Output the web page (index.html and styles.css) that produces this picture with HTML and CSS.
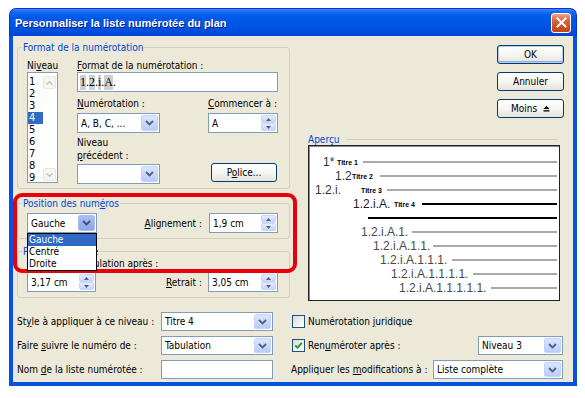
FILE: index.html
```html
<!DOCTYPE html>
<html lang="fr">
<head>
    <meta charset="UTF-8">
    <meta name="viewport" content="width=device-width, initial-scale=1.0">
    <title>Personnaliser la liste numérotée du plan</title>
    <link rel="stylesheet" href="styles.css">
</head>
<body>
    <div class="window">
        <div class="titlebar">
            <span class="title">Personnaliser la liste numérotée du plan</span>
            <span class="close">
                <svg width="11" height="11" viewBox="0 0 11 11"><path d="M1.5 1.5L9.5 9.5M9.5 1.5L1.5 9.5" stroke="#fff" stroke-width="2" stroke-linecap="square"/></svg>
            </span>
        </div>

        <div class="client">
            <div class="top">
                <div class="left-col">
                    <!-- Format de la numérotation -->
                    <fieldset class="group">
                        <legend>Format de la numérotation</legend>
                        <div class="gbody format-body">
                            <div class="niveau-col">
                                <div class="lbl">Ni<u>v</u>eau</div>
                                <div class="listbox">
                                    <div class="items">
                                        <div class="item">1</div>
                                        <div class="item">2</div>
                                        <div class="item">3</div>
                                        <div class="item selected">4</div>
                                        <div class="item">5</div>
                                        <div class="item">6</div>
                                        <div class="item">7</div>
                                        <div class="item">8</div>
                                        <div class="item">9</div>
                                    </div>
                                    <div class="vscroll">
                                        <span class="sbtn"><svg width="7" height="4" viewBox="0 0 7 4"><path d="M0.5 3.5L3.5 0.8L6.5 3.5" fill="none" stroke="#C4C2B5" stroke-width="1.4"/></svg></span>
                                        <span class="sbtn"><svg width="7" height="4" viewBox="0 0 7 4"><path d="M0.5 0.5L3.5 3.2L6.5 0.5" fill="none" stroke="#C4C2B5" stroke-width="1.4"/></svg></span>
                                    </div>
                                </div>
                            </div>

                            <div class="format-col">
                                <div class="lbl"><u>F</u>ormat de la numérotation :</div>
                                <div class="field fmt-field"><span class="fld">1</span>.<span class="fld">2</span>.<span class="fld">i</span>.<span class="fld">A</span>.</div>

                                <div class="frow mt5">
                                    <div class="lbl w131"><u>N</u>umérotation :</div>
                                    <div class="lbl"><u>C</u>ommencer à :</div>
                                </div>
                                <div class="frow mt3">
                                    <div class="combo w83">
                                        <span class="val">A, B, C, ...</span>
                                        <span class="drop"><svg width="9" height="6" viewBox="0 0 9 6"><path d="M1 1l3.5 3.5L8 1" fill="none" stroke="#4D6185" stroke-width="1.8"/></svg></span>
                                    </div>
                                    <div class="spin w70 ml48">
                                        <span class="val">A</span>
                                        <span class="arrows">
                                            <span class="arr"><svg width="5" height="3" viewBox="0 0 5 3"><path d="M0 3h5L2.5 0z" fill="#4D6185"/></svg></span>
                                            <span class="arr"><svg width="5" height="3" viewBox="0 0 5 3"><path d="M0 0h5L2.5 3z" fill="#4D6185"/></svg></span>
                                        </span>
                                    </div>
                                </div>
                                <div class="lbl mt3">Niveau<br><u>p</u>récédent :</div>
                                <div class="frow mt1">
                                    <div class="combo w83 mt1">
                                        <span class="val"></span>
                                        <span class="drop"><svg width="9" height="6" viewBox="0 0 9 6"><path d="M1 1l3.5 3.5L8 1" fill="none" stroke="#4D6185" stroke-width="1.8"/></svg></span>
                                    </div>
                                    <div class="btn police"><span>P<u>o</u>lice...</span></div>
                                </div>
                            </div>
                        </div>
                    </fieldset>

                    <!-- Position des numéros -->
                    <fieldset class="group g-pos">
                        <legend>Position des num<u>é</u>ros</legend>
                        <div class="gbody pos-body">
                            <div class="combo w70 hot">
                                <span class="val">Gauche</span>
                                <span class="drop"><svg width="9" height="6" viewBox="0 0 9 6"><path d="M1 1l3.5 3.5L8 1" fill="none" stroke="#3D4F78" stroke-width="1.8"/></svg></span>
                            </div>
                            <div class="lbl push"><u>A</u>lignement :</div>
                            <div class="spin w69 ml7">
                                <span class="val">1,9 cm</span>
                                <span class="arrows">
                                    <span class="arr"><svg width="5" height="3" viewBox="0 0 5 3"><path d="M0 3h5L2.5 0z" fill="#4D6185"/></svg></span>
                                    <span class="arr"><svg width="5" height="3" viewBox="0 0 5 3"><path d="M0 0h5L2.5 3z" fill="#4D6185"/></svg></span>
                                </span>
                            </div>
                        </div>
                    </fieldset>

                    <!-- Position du texte -->
                    <fieldset class="group g-text">
                        <legend>Position du texte</legend>
                        <div class="gbody text-body">
                            <div class="lbl up1">Position de tabulation après :</div>
                            <div class="frow mt2 center">
                                <div class="spin w69">
                                    <span class="val">3,17 cm</span>
                                    <span class="arrows">
                                        <span class="arr"><svg width="5" height="3" viewBox="0 0 5 3"><path d="M0 3h5L2.5 0z" fill="#4D6185"/></svg></span>
                                        <span class="arr"><svg width="5" height="3" viewBox="0 0 5 3"><path d="M0 0h5L2.5 3z" fill="#4D6185"/></svg></span>
                                    </span>
                                </div>
                                <div class="lbl push"><u>R</u>etrait :</div>
                                <div class="spin w70 ml6">
                                    <span class="val">3,05 cm</span>
                                    <span class="arrows">
                                        <span class="arr"><svg width="5" height="3" viewBox="0 0 5 3"><path d="M0 3h5L2.5 0z" fill="#4D6185"/></svg></span>
                                        <span class="arr"><svg width="5" height="3" viewBox="0 0 5 3"><path d="M0 0h5L2.5 3z" fill="#4D6185"/></svg></span>
                                    </span>
                                </div>
                            </div>
                        </div>
                    </fieldset>
                </div>

                <div class="right-col">
                    <div class="buttons">
                        <div class="btn default"><span>OK</span></div>
                        <div class="btn"><span>Annuler</span></div>
                        <div class="btn"><span>Moins</span><svg class="less" width="7" height="7" viewBox="0 0 7 7"><path d="M0.5 4L3.5 0.8L6.5 4z" fill="#000"/><rect x="0.5" y="5.2" width="6" height="1.3" fill="#000"/></svg></div>
                    </div>

                    <div class="apercu-head">
                        <span class="legend-text">Aperçu</span>
                        <span class="apercu-line"></span>
                    </div>
                    <div class="preview">
                        <div class="pv r1"><span class="num">1*</span><span class="ttl">Titre 1</span><span class="bar"></span></div>
                        <div class="pv r2"><span class="num">1.2</span><span class="ttl">Titre 2</span><span class="bar"></span></div>
                        <div class="pv r3"><span class="num">1.2.i.</span><span class="ttl">Titre 3</span><span class="bar"></span></div>
                        <div class="pv r4"><span class="num">1.2.i.A.</span><span class="ttl">Titre 4</span><span class="bar dark"></span></div>
                        <div class="pv r5"><span class="bar dark"></span></div>
                        <div class="pv r6"><span class="num">1.2.i.A.1.</span><span class="bar"></span></div>
                        <div class="pv r7"><span class="num">1.2.i.A.1.1.</span><span class="bar"></span></div>
                        <div class="pv r8"><span class="num">1.2.i.A.1.1.1.</span><span class="bar"></span></div>
                        <div class="pv r9"><span class="num">1.2.i.A.1.1.1.1.</span><span class="bar"></span></div>
                        <div class="pv r10"><span class="num">1.2.i.A.1.1.1.1.1.</span><span class="bar"></span></div>
                    </div>
                </div>
            </div>

            <div class="bottom">
                <div class="bl">
                    <div class="brow">
                        <div class="lbl w144">St<u>y</u>le à appliquer à ce niveau :</div>
                        <div class="combo w112 h19">
                            <span class="val">Titre 4</span>
                            <span class="drop"><svg width="9" height="6" viewBox="0 0 9 6"><path d="M1 1l3.5 3.5L8 1" fill="none" stroke="#4D6185" stroke-width="1.8"/></svg></span>
                        </div>
                    </div>
                    <div class="brow">
                        <div class="lbl w144">Faire <u>s</u>uivre le numéro de :</div>
                        <div class="combo w112 h19">
                            <span class="val">Tabulation</span>
                            <span class="drop"><svg width="9" height="6" viewBox="0 0 9 6"><path d="M1 1l3.5 3.5L8 1" fill="none" stroke="#4D6185" stroke-width="1.8"/></svg></span>
                        </div>
                    </div>
                    <div class="brow">
                        <div class="lbl w144">Nom <u>d</u>e la liste numérotée :</div>
                        <div class="field w112 h19"></div>
                    </div>
                </div>

                <div class="br">
                    <div class="brow">
                        <span class="check"></span>
                        <span class="lbl">Numérotation <u>j</u>uridique</span>
                    </div>
                    <div class="brow">
                        <span class="check on"><svg width="9" height="9" viewBox="0 0 9 9"><path d="M1.2 4.3l2.3 2.4L7.8 1.8" fill="none" stroke="#21A121" stroke-width="1.9"/></svg></span>
                        <span class="lbl">Ren<u>u</u>méroter après :</span>
                        <div class="combo w85 h19 push">
                            <span class="val">Niveau 3</span>
                            <span class="drop"><svg width="9" height="6" viewBox="0 0 9 6"><path d="M1 1l3.5 3.5L8 1" fill="none" stroke="#4D6185" stroke-width="1.8"/></svg></span>
                        </div>
                    </div>
                    <div class="brow">
                        <span class="lbl">Appliquer les <u>m</u>odifications à :</span>
                        <div class="combo w130 h19 push">
                            <span class="val">Liste complète</span>
                            <span class="drop"><svg width="9" height="6" viewBox="0 0 9 6"><path d="M1 1l3.5 3.5L8 1" fill="none" stroke="#4D6185" stroke-width="1.8"/></svg></span>
                        </div>
                    </div>
                </div>
            </div>

            <!-- overlays: red highlight and the opened drop-down list -->
            <div class="highlight"></div>
            <div class="droplist">
                <div class="ditem selected">Gauche</div>
                <div class="ditem">Centré</div>
                <div class="ditem">Droite</div>
            </div>
        </div>
    </div>
</body>
</html>
```

FILE: styles.css
```css
* {
    box-sizing: border-box;
}

body {
    margin: 0;
    background: #ffffff;
    font-family: "DejaVu Sans Condensed", "DejaVu Sans", sans-serif;
    font-size: 10px;
    color: #000000;
}

u {
    text-decoration: underline;
    text-underline-offset: 1px;
}

/* window frame */

.window {
    width: 568px;
    margin: 8px 0 0 9px;
}

.titlebar {
    height: 28px;
    display: flex;
    align-items: center;
    justify-content: space-between;
    padding: 0 5px 0 5px;
    border: 1px solid #0831D9;
    border-bottom: none;
    border-radius: 7px 7px 0 0;
    background: linear-gradient(to bottom, #3D8DF8 0px, #1668EE 3px, #0059E8 8px, #0055E5 17px, #004BDA 24px, #0040D2 28px);
}

.title {
    font-family: "Liberation Sans", Arial, sans-serif;
    font-size: 11px;
    font-weight: bold;
    color: #ffffff;
    text-shadow: 1px 1px 0 #0A1E8A;
}

.close {
    width: 20px;
    height: 20px;
    display: flex;
    align-items: center;
    justify-content: center;
    border: 1px solid #ffffff;
    border-radius: 3px;
    background: linear-gradient(to bottom, #E9A88F 0%, #DC6539 35%, #CC4A1E 75%, #C4441B 100%);
}

.client {
    position: relative;
    height: 350px;
    padding: 0 9px 0 4px;
    background: #ECE9D8;
    border: 4px solid #0552E0;
    border-top: none;
}

.top {
    display: flex;
    align-items: flex-start;
    gap: 1px;
}

/* group boxes */

.left-col {
    width: 273px;
    padding-top: 5px;
}

.group {
    margin: 0;
    padding: 0;
    min-width: 0;
    border: 1px solid #D0D0BF;
    border-radius: 3px;
}

.group legend {
    margin-left: 4px;
    padding: 0 1px;
    line-height: 13px;
    color: #0046D5;
}

.g-pos {
    margin-top: 8px;
}

.g-text {
    margin-top: 6px;
}

.gbody {
    padding: 5px 11px 4px 9px;
}

.lbl {
    line-height: 13px;
    white-space: nowrap;
}

.frow {
    display: flex;
    align-items: flex-start;
}

.frow.center {
    align-items: center;
}

.mt1 { margin-top: 1px; }
.mt2 { margin-top: 2px; }
.mt3 { margin-top: 3px; }
.mt5 { margin-top: 5px; }
.ml6 { margin-left: 6px; }
.ml7 { margin-left: 7px; }
.ml48 { margin-left: 48px; }
.up1 { margin-top: -1px; }
.push { margin-left: auto; }

.w69 { width: 69px; }
.w70 { width: 70px; }
.w83 { width: 83px; }
.w85 { width: 85px; }
.w112 { width: 112px; }
.w130 { width: 130px; }
.w131 { width: 131px; }
.w144 { width: 144px; }
.h19 { height: 19px !important; }

/* format group */

.format-body {
    display: flex;
}

.niveau-col {
    width: 31px;
    margin-right: 19px;
}

.listbox {
    height: 111px;
    display: flex;
    border: 1px solid #7F9DB9;
    background: #ffffff;
}

.items {
    width: 15px;
    padding-top: 3px;
}

.item {
    height: 12px;
    line-height: 12px;
    padding-left: 1px;
    font-size: 11px;
}

.item.selected {
    background: #316AC5;
    color: #ffffff;
}

.vscroll {
    flex: 1;
    display: flex;
    flex-direction: column;
    justify-content: space-between;
    padding: 3px 1px 1px 0;
}

.sbtn {
    height: 13px;
    display: flex;
    align-items: center;
    justify-content: center;
    border: 1px solid #E8E7DE;
    border-radius: 2px;
    background: #F6F5F1;
}

.format-col {
    width: 201px;
}

.field {
    height: 20px;
    display: flex;
    align-items: center;
    padding-left: 2px;
    border: 1px solid #7F9DB9;
    background: #ffffff;
}

.fmt-field {
    font-family: "Liberation Serif", "Times New Roman", serif;
    font-size: 12px;
}

.fld {
    background: #CFCFCF;
}

/* position group */

.pos-body {
    display: flex;
    align-items: center;
    padding: 3px 11px 5px 9px;
}

.text-body {
    padding: 0 11px 5px 9px;
}

/* combo boxes and spin boxes */

.combo,
.spin {
    height: 20px;
    display: flex;
    border: 1px solid #7F9DB9;
    background: #ffffff;
}

.combo .val,
.spin .val {
    flex: 1;
    display: flex;
    align-items: center;
    padding-left: 3px;
    white-space: nowrap;
    overflow: hidden;
}

.drop {
    width: 17px;
    margin: 1px;
    display: flex;
    align-items: center;
    justify-content: center;
    border: 1px solid #C3D3FD;
    border-radius: 2px;
    background: linear-gradient(to bottom, #DCE6FE, #B8CCF8);
}

.combo.hot .drop {
    border-color: #A9BFF2;
    background: linear-gradient(to bottom, #A9BEF3, #8AA6EC);
}

.arrows {
    width: 15px;
    margin: 1px;
    display: flex;
    flex-direction: column;
}

.arr {
    flex: 1;
    display: flex;
    align-items: center;
    justify-content: center;
    border: 1px solid #C9D6F6;
    border-radius: 2px;
    background: linear-gradient(to bottom, #E6EDFD, #C6D5F8);
}

/* buttons */

.btn {
    height: 19px;
    display: flex;
    align-items: center;
    justify-content: center;
    border: 1px solid #003C74;
    border-radius: 3px;
    background: linear-gradient(to bottom, #FFFFFF 0%, #F4F4F0 55%, #E6E3D8 100%);
}

.btn.default {
    box-shadow: inset 0 0 0 1px #B6CCF1, inset 0 -1px 0 1px #8EAEE8;
}

.police {
    width: 66px;
    margin-left: 51px;
}

/* right column */

.right-col {
    width: 273px;
}

.buttons {
    display: flex;
    flex-direction: column;
    align-items: flex-end;
    gap: 8px;
    padding-top: 9px;
}

.buttons .btn {
    width: 67px;
}

.less {
    margin: -1px 0 0 6px;
}

.apercu-head {
    width: 250px;
    display: flex;
    align-items: center;
    margin: 16px 0 0 17px;
    line-height: 11px;
}

.legend-text {
    color: #0046D5;
}

.apercu-line {
    flex: 1;
    margin-left: 6px;
    border-top: 1px solid #D0D0BF;
}

.preview {
    width: 252px;
    height: 156px;
    margin-left: 17px;
    padding: 9px 2px 0 0;
    border: 1px solid #222222;
    box-shadow: inset 1px 1px 0 #8A8A8A;
    background: #ffffff;
}

.pv {
    height: 14px;
    display: flex;
    align-items: center;
}

.num {
    flex: none;
    font-family: "Liberation Sans", Arial, sans-serif;
    font-size: 12px;
    color: #484848;
    white-space: nowrap;
}

.ttl {
    flex: none;
    font-family: "Liberation Sans", Arial, sans-serif;
    font-size: 7px;
    font-weight: bold;
    white-space: nowrap;
}

.bar {
    flex: 1;
    height: 2px;
    background: #A9A9A9;
}

.bar.dark {
    background: #000000;
}

.r1 { padding-left: 14px; }
.r1 .num { width: 14px; color: #333; }
.r1 .ttl { width: 26px; }
.r2 { padding-left: 26px; }
.r2 .num { width: 17px; color: #333; }
.r2 .ttl { width: 28px; }
.r3 { padding-left: 6px; }
.r3 .num { width: 46px; color: #333; }
.r3 .ttl { width: 26px; }
.r4 { padding-left: 44px; }
.r4 .num { width: 41px; color: #222; }
.r4 .ttl { width: 28px; }
.r5 { padding-left: 59px; }
.r6 { padding-left: 52px; }
.r6 .num { width: 51px; }
.r7 { padding-left: 64px; }
.r7 .num { width: 60px; }
.r8 { padding-left: 71px; }
.r8 .num { width: 72px; }
.r9 { padding-left: 82px; }
.r9 .num { width: 82px; }
.r10 { padding-left: 90px; }
.r10 .num { width: 92px; }

/* bottom rows */

.bottom {
    display: flex;
    margin-top: 11px;
}

.bl {
    width: 256px;
}

.br {
    width: 272px;
    margin-left: 18px;
}

.brow {
    height: 19px;
    display: flex;
    align-items: center;
}

.brow + .brow {
    margin-top: 5px;
}

.check {
    width: 13px;
    height: 13px;
    margin: 0 3px 0 1px;
    display: flex;
    align-items: center;
    justify-content: center;
    border: 1px solid #1C5180;
    background: linear-gradient(135deg, #DCDCD7, #FFFFFF);
}

/* overlays */

.highlight {
    position: absolute;
    left: 0;
    top: 157px;
    width: 284px;
    height: 80px;
    border: 4px solid #E8000B;
    border-radius: 9px;
}

.droplist {
    position: absolute;
    left: 14px;
    top: 197px;
    width: 70px;
    border: 1px solid #000000;
    background: #ffffff;
}

.ditem {
    height: 12px;
    line-height: 12px;
    padding-left: 1px;
}

.ditem.selected {
    background: #316AC5;
    color: #ffffff;
}
```
